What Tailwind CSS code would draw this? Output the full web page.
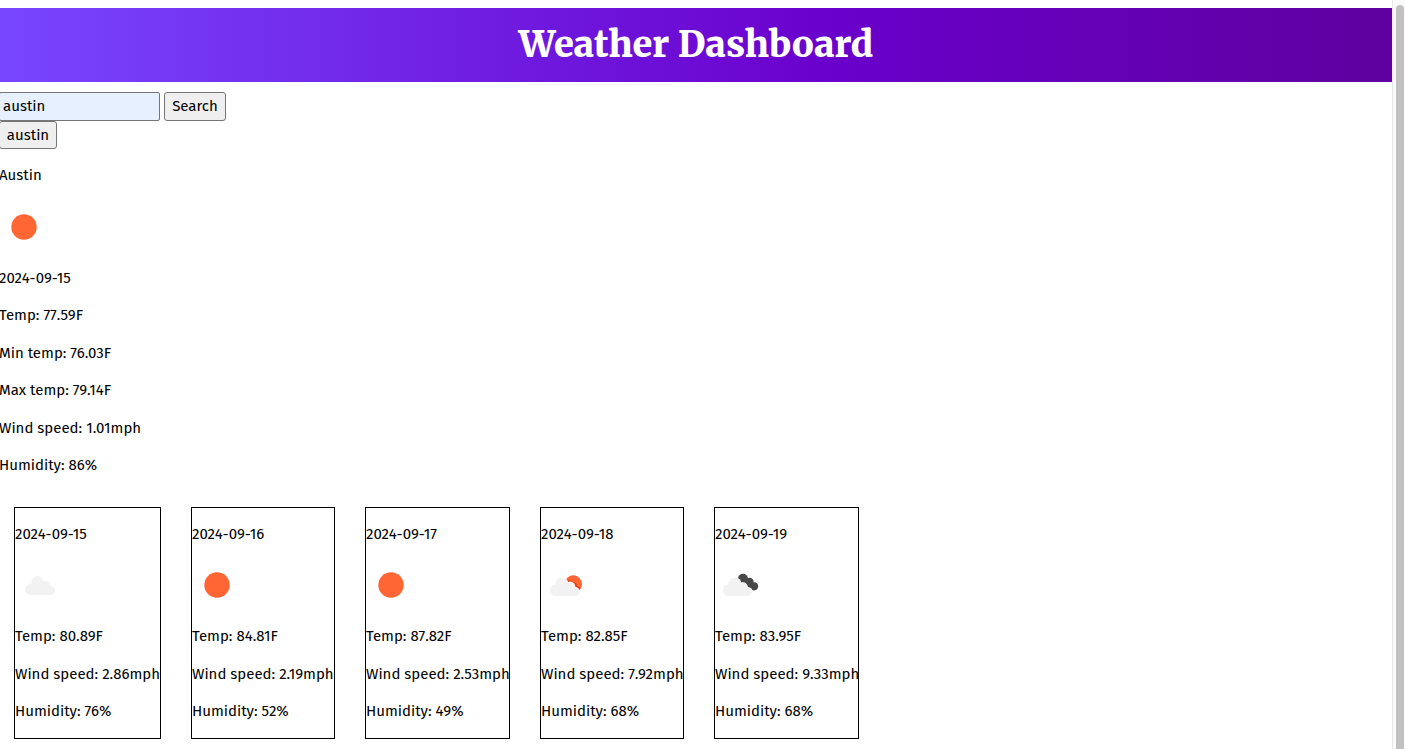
<!DOCTYPE html>
<html lang="en">
<head>
<meta charset="utf-8">
<title>Weather Dashboard</title>
<script src="https://cdn.jsdelivr.net/npm/@tailwindcss/browser@4"></script>
</head>
<body class="bg-white text-black font-['Fira_Sans','Noto_Sans',sans-serif] text-[15px] leading-[22px]">
<svg class="hidden" aria-hidden="true">
  <symbol id="sun" viewBox="0 0 50 50"><circle cx="25" cy="25" r="12.7" fill="#ff6633"/></symbol>
  <symbol id="cloud" viewBox="0 0 50 50">
    <g fill="#f2f2f2"><circle cx="15.700" cy="29.400" r="5.600"/><circle cx="22.500" cy="22.300" r="6.200"/><circle cx="31" cy="25" r="4.200"/><circle cx="35.800" cy="30.600" r="4.400"/><path d="M15.700 24H31l5 4v7H15.700z"/></g>
  </symbol>
  <symbol id="broken" viewBox="0 0 50 50">
    <path d="M24.500 20a8.700 8.700 0 1 1 15.500 8l-1.200 2-5-4-4-4z" fill="#ff6633"/>
    <path d="M26 19.800l4 .6 1.500 1.600 3.500 1 1.500 3 2.500 1.500v3l-6-3-6-5z" fill="#e23f10"/>
    <g fill="#fff"><circle cx="20.300" cy="24" r="7"/><circle cx="29" cy="27" r="5.400"/><circle cx="34" cy="32" r="5"/></g>
    <g fill="#f2f2f2"><circle cx="14.500" cy="30.300" r="5.700"/><circle cx="20.800" cy="24" r="6.300"/><circle cx="29" cy="27" r="4.300"/><circle cx="34" cy="31.700" r="4.300"/><path d="M14.500 25.500H29l5 4V36H14.500z"/></g>
  </symbol>
  <symbol id="clouds" viewBox="0 0 50 50">
    <g fill="#484848"><circle cx="28" cy="18.800" r="5"/><circle cx="34.500" cy="22" r="4.200"/><circle cx="39" cy="26.300" r="4.100"/><path d="M28 18l6 2 5 6-2 4-10-7z"/></g>
    <g fill="#fff"><circle cx="19.800" cy="24" r="6.800"/><circle cx="27.800" cy="27.300" r="5"/><circle cx="33" cy="31.900" r="4.700"/></g>
    <g fill="#f2f2f2"><circle cx="13.500" cy="30.300" r="5.700"/><circle cx="19.800" cy="24" r="6.300"/><circle cx="28" cy="27" r="4.300"/><circle cx="33" cy="31.700" r="4.300"/><path d="M13.500 25.500H28l5 4V36H13.500z"/></g>
  </symbol>
</svg>
<div class="flex h-screen overflow-hidden">
  <div class="min-w-0 grow overflow-hidden pt-2">
    <header class="bg-linear-to-r/srgb from-[#7846ff] via-[#6a00cb] via-60% to-[#5f009f] px-4 py-[9px] text-center">
      <h1 class="font-['Merriweather','DejaVu_Serif_Condensed','DejaVu_Serif',serif] text-[36px] leading-[56px] font-black text-white">Weather Dashboard</h1>
    </header>
    <main class="-ml-px pt-[10px]">
      <form class="flex gap-1">
        <input type="text" aria-label="City" value="austin" class="h-[29px] w-[161px] rounded-xs border border-[#767676] bg-[#e6f0ff] px-[3px] pb-0.5">
        <button type="button" class="h-[29px] w-[62px] rounded-[3px] border border-[#767676] bg-[#efefef] pb-0.5">Search</button>
      </form>
      <button type="button" class="block h-7 w-[58px] rounded-[3px] border border-[#767676] bg-[#efefef]">austin</button>
      <section>
        <p class="mt-[15px]">Austin</p>
        <svg class="mt-4 size-[50px]" role="img" aria-label="Clear sky"><use href="#sun"/></svg>
        <div class="mt-[15px] flex h-[209px] flex-col justify-between">
          <p>2024-09-15</p><p>Temp: 77.59F</p><p>Min temp: 76.03F</p><p>Max temp: 79.14F</p><p>Wind speed: 1.01mph</p><p>Humidity: 86%</p>
        </div>
      </section>
      <section class="mt-[31px] ml-[15px] flex gap-[30px] whitespace-nowrap">
        <article class="w-[147px] border border-black pt-[15px] pb-4">
          <p>2024-09-15</p>
          <svg class="mt-[15px] size-[50px]" role="img" aria-label="Cloudy"><use href="#cloud"/></svg>
          <div class="mt-[15px] flex h-[97px] flex-col justify-between"><p>Temp: 80.89F</p><p>Wind speed: 2.86mph</p><p>Humidity: 76%</p></div>
        </article>
        <article class="w-[144px] border border-black pt-[15px] pb-4">
          <p>2024-09-16</p>
          <svg class="mt-[15px] size-[50px]" role="img" aria-label="Clear sky"><use href="#sun"/></svg>
          <div class="mt-[15px] flex h-[97px] flex-col justify-between"><p>Temp: 84.81F</p><p>Wind speed: 2.19mph</p><p>Humidity: 52%</p></div>
        </article>
        <article class="w-[145px] border border-black pt-[15px] pb-4">
          <p>2024-09-17</p>
          <svg class="mt-[15px] size-[50px]" role="img" aria-label="Clear sky"><use href="#sun"/></svg>
          <div class="mt-[15px] flex h-[97px] flex-col justify-between"><p>Temp: 87.82F</p><p>Wind speed: 2.53mph</p><p>Humidity: 49%</p></div>
        </article>
        <article class="w-[144px] border border-black pt-[15px] pb-4">
          <p>2024-09-18</p>
          <svg class="mt-[15px] size-[50px]" role="img" aria-label="Partly cloudy"><use href="#broken"/></svg>
          <div class="mt-[15px] flex h-[97px] flex-col justify-between"><p>Temp: 82.85F</p><p>Wind speed: 7.92mph</p><p>Humidity: 68%</p></div>
        </article>
        <article class="w-[145px] border border-black pt-[15px] pb-4">
          <p>2024-09-19</p>
          <svg class="mt-[15px] size-[50px]" role="img" aria-label="Broken clouds"><use href="#clouds"/></svg>
          <div class="mt-[15px] flex h-[97px] flex-col justify-between"><p>Temp: 83.95F</p><p>Wind speed: 9.33mph</p><p>Humidity: 68%</p></div>
        </article>
      </section>
    </main>
  </div>
  <div class="flex w-[13px] shrink-0 border-l border-[#e8e8e8] bg-[#fafafa] pt-[5px] pr-px pl-[3px]" aria-hidden="true">
    <div class="grow rounded-t-full bg-[#c1c1c1]"></div>
  </div>
</div>
</body>
</html>
